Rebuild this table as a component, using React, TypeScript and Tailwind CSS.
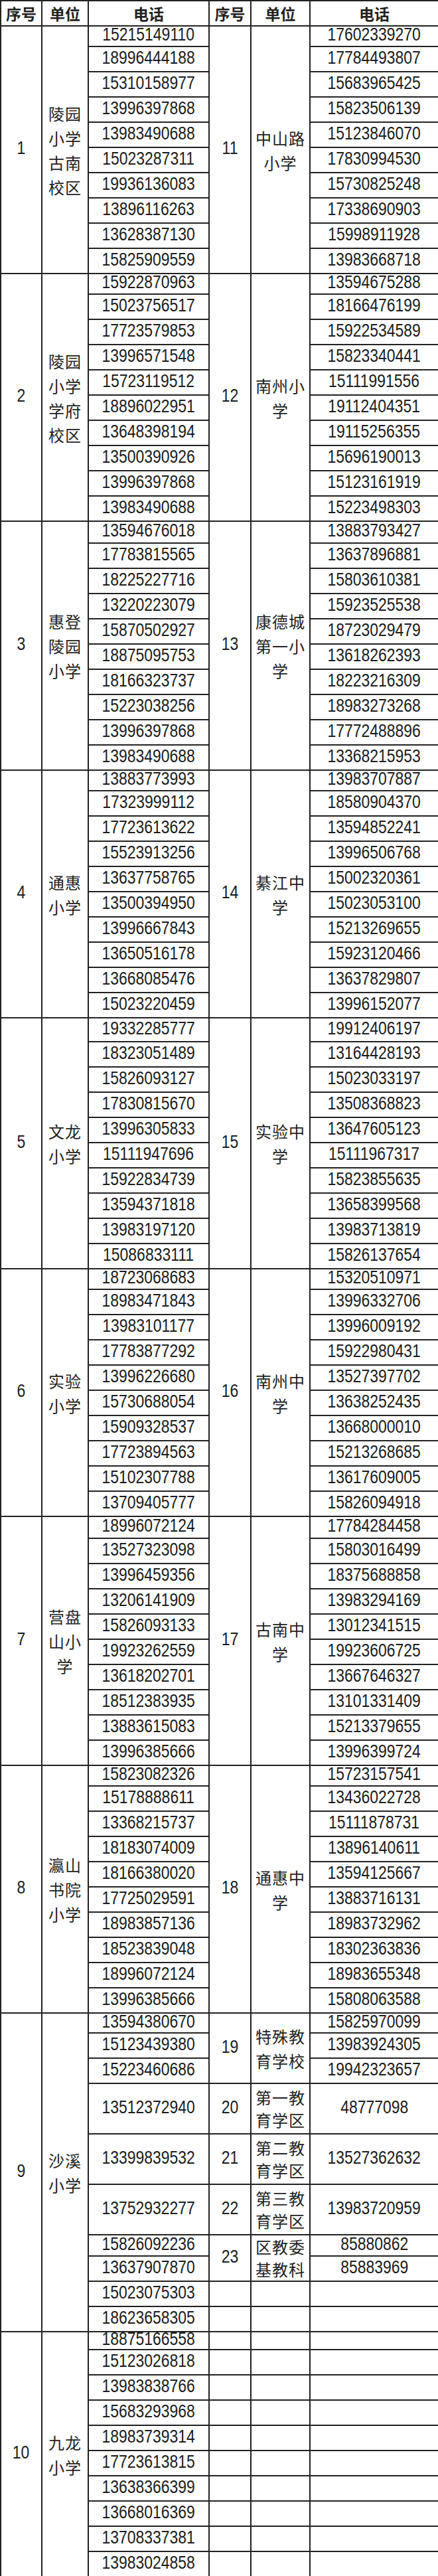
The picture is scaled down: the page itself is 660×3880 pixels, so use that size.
import React from "react";

type Section = {
  no: string;
  name: string;
  first: string;
  phones: string[];
  rno: string;
  rname: string;
  rphones: string[];
};

const SECTIONS: Section[] = [
  {
    no: "1",
    name: "陵园小学古南校区",
    first: "h-[31px]",
    phones: ["15215149110", "18996444188", "15310158977", "13996397868", "13983490688", "15023287311", "19936136083", "13896116263", "13628387130", "15825909559"],
    rno: "11",
    rname: "中山路小学",
    rphones: ["17602339270", "17784493807", "15683965425", "15823506139", "15123846070", "17830994530", "15730825248", "17338690903", "15998911928", "13983668718"],
  },
  {
    no: "2",
    name: "陵园小学学府校区",
    first: "h-[31px]",
    phones: ["15922870963", "15023756517", "17723579853", "13996571548", "15723119512", "18896022951", "13648398194", "13500390926", "13996397868", "13983490688"],
    rno: "12",
    rname: "南州小学",
    rphones: ["13594675288", "18166476199", "15922534589", "15823340441", "15111991556", "19112404351", "19115256355", "15696190013", "15123161919", "15223498303"],
  },
  {
    no: "3",
    name: "惠登陵园小学",
    first: "h-[33px]",
    phones: ["13594676018", "17783815565", "18225227716", "13220223079", "15870502927", "18875095753", "18166323737", "15223038256", "13996397868", "13983490688"],
    rno: "13",
    rname: "康德城第一小学",
    rphones: ["13883793427", "13637896881", "15803610381", "15923525538", "18723029479", "13618262393", "18223216309", "18983273268", "17772488896", "13368215953"],
  },
  {
    no: "4",
    name: "通惠小学",
    first: "h-[31px]",
    phones: ["13883773993", "17323999112", "17723613622", "15523913256", "13637758765", "13500394950", "13996667843", "13650516178", "13668085476", "15023220459"],
    rno: "14",
    rname: "綦江中学",
    rphones: ["13983707887", "18580904370", "13594852241", "13996506768", "15002320361", "15023053100", "15213269655", "15923120466", "13637829807", "13996152077"],
  },
  {
    no: "5",
    name: "文龙小学",
    first: "h-[36px]",
    phones: ["19332285777", "18323051489", "15826093127", "17830815670", "13996305833", "15111947696", "15922834739", "13594371818", "13983197120", "15086833111"],
    rno: "15",
    rname: "实验中学",
    rphones: ["19912406197", "13164428193", "15023033197", "13508368823", "13647605123", "15111967317", "15823855635", "13658399568", "13983713819", "15826137654"],
  },
  {
    no: "6",
    name: "实验小学",
    first: "h-[31px]",
    phones: ["18723068683", "18983471843", "13983101177", "17783877292", "13996226680", "15730688054", "15909328537", "17723894563", "15102307788", "13709405777"],
    rno: "16",
    rname: "南州中学",
    rphones: ["15320510971", "13996332706", "13996009192", "15922980431", "13527397702", "13638252435", "13668000010", "15213268685", "13617609005", "15826094918"],
  },
  {
    no: "7",
    name: "营盘山小学",
    first: "h-[33px]",
    phones: ["18996072124", "13527323098", "13996459356", "13206141909", "15826093133", "19923262559", "13618202701", "18512383935", "13883615083", "13996385666"],
    rno: "17",
    rname: "古南中学",
    rphones: ["17784284458", "15803016499", "18375688858", "13983294169", "13012341515", "19923606725", "13667646327", "13101331409", "15213379655", "13996399724"],
  },
  {
    no: "8",
    name: "瀛山书院小学",
    first: "h-[31px]",
    phones: ["15823082326", "15178888611", "13368215737", "18183074009", "18166380020", "17725029591", "18983857136", "18523839048", "18996072124", "13996385666"],
    rno: "18",
    rname: "通惠中学",
    rphones: ["15723157541", "13436022728", "15111878731", "13896140611", "13594125667", "13883716131", "18983732962", "18302363836", "18983655348", "15808063588"],
  },
];

const SHAXI = ["13594380670", "15123439380", "15223460686", "13512372940", "13399839532", "13752932277", "15826092236", "13637907870", "15023075303", "18623658305"];
const SHAXI_H = ["h-[30px]", "h-[38px]", "h-[38px]", "h-[76px]", "h-[76px]", "h-[76px]", "h-[32px]", "h-[38px]", "h-[38px]", "h-[38px]"];

const JIULONG = ["18875166558", "15123026818", "13983838766", "15683293968", "18983739314", "17723613815", "13638366399", "13668016369", "13708337381", "13983024858"];

const cell = "border-2 border-[#222] p-0 text-center align-middle";

function Num({ v }: { v: string }) {
  return (
    <span className="inline-block scale-x-[0.82] font-['Liberation_Sans',sans-serif] text-[28px] leading-[20px] text-[#1c1c1c]">
      {v}
    </span>
  );
}

function Name({ v, tight }: { v: string; tight?: boolean }) {
  return (
    <div
      className={
        "font-['Noto_Sans_CJK_SC',sans-serif] text-[24px] tracking-[1px] text-[#222] " +
        (tight ? "leading-[34px]" : "leading-[37px]")
      }
    >
      {v}
    </div>
  );
}

function SectionRows({ s }: { s: Section }) {
  return (
    <>
      {s.phones.map((p, i) => (
        <tr key={p + i} className={i === 0 ? s.first : "h-[38px]"}>
          {i === 0 && (
            <>
              <td rowSpan={10} className={cell}>
                <Num v={s.no} />
              </td>
              <td rowSpan={10} className={cell}>
                <Name v={s.name} />
              </td>
            </>
          )}
          <td className={cell}>
            <Num v={p} />
          </td>
          {i === 0 && (
            <>
              <td rowSpan={10} className={cell}>
                <Num v={s.rno} />
              </td>
              <td rowSpan={10} className={cell}>
                <Name v={s.rname} />
              </td>
            </>
          )}
          <td className={cell}>
            <Num v={s.rphones[i]} />
          </td>
        </tr>
      ))}
    </>
  );
}

export default function App() {
  return (
    <div className="w-[660px] bg-white">
      <table className="w-[660px] table-fixed border-collapse">
        <colgroup>
          <col className="w-[62px]" />
          <col className="w-[70px]" />
          <col className="w-[182px]" />
          <col className="w-[63px]" />
          <col className="w-[89px]" />
          <col className="w-[194px]" />
        </colgroup>
        <thead>
          <tr className="h-[38px]">
            {["序号", "单位", "电话", "序号", "单位", "电话"].map((h, i) => (
              <th
                key={i}
                className={cell + " font-['Noto_Sans_CJK_SC',sans-serif] text-[23px] font-bold leading-none text-[#222]"}
              >
                {h}
              </th>
            ))}
          </tr>
        </thead>
        <tbody>
          {SECTIONS.map((s) => (
            <SectionRows key={s.no} s={s} />
          ))}

          {/* 沙溪小学 with the odd right-hand blocks */}
          {SHAXI.map((p, i) => (
            <tr key={"sx" + i} className={SHAXI_H[i]}>
              {i === 0 && (
                <>
                  <td rowSpan={10} className={cell}>
                    <Num v="9" />
                  </td>
                  <td rowSpan={10} className={cell}>
                    <Name v="沙溪小学" />
                  </td>
                </>
              )}
              <td className={cell}>
                <Num v={p} />
              </td>
              {i === 0 && (
                <>
                  <td rowSpan={3} className={cell}>
                    <Num v="19" />
                  </td>
                  <td rowSpan={3} className={cell}>
                    <Name v="特殊教育学校" />
                  </td>
                </>
              )}
              {i === 0 && <td className={cell}><Num v="15825970099" /></td>}
              {i === 1 && <td className={cell}><Num v="13983924305" /></td>}
              {i === 2 && <td className={cell}><Num v="19942323657" /></td>}
              {i === 3 && (
                <>
                  <td className={cell}><Num v="20" /></td>
                  <td className={cell}><Name v="第一教育学区" tight /></td>
                  <td className={cell}><Num v="48777098" /></td>
                </>
              )}
              {i === 4 && (
                <>
                  <td className={cell}><Num v="21" /></td>
                  <td className={cell}><Name v="第二教育学区" tight /></td>
                  <td className={cell}><Num v="13527362632" /></td>
                </>
              )}
              {i === 5 && (
                <>
                  <td className={cell}><Num v="22" /></td>
                  <td className={cell}><Name v="第三教育学区" tight /></td>
                  <td className={cell}><Num v="13983720959" /></td>
                </>
              )}
              {i === 6 && (
                <>
                  <td rowSpan={2} className={cell}><Num v="23" /></td>
                  <td rowSpan={2} className={cell}><Name v="区教委基教科" tight /></td>
                  <td className={cell}><Num v="85880862" /></td>
                </>
              )}
              {i === 7 && <td className={cell}><Num v="85883969" /></td>}
              {i >= 8 && (
                <>
                  <td className={cell} />
                  <td className={cell} />
                  <td className={cell} />
                </>
              )}
            </tr>
          ))}

          {JIULONG.map((p, i) => (
            <tr key={"jl" + i} className={i === 0 ? "h-[24px]" : "h-[38px]"}>
              {i === 0 && (
                <>
                  <td rowSpan={10} className={cell}>
                    <Num v="10" />
                  </td>
                  <td rowSpan={10} className={cell}>
                    <Name v="九龙小学" />
                  </td>
                </>
              )}
              <td className={cell}>
                <Num v={p} />
              </td>
              <td className={cell} />
              <td className={cell} />
              <td className={cell} />
            </tr>
          ))}
        </tbody>
      </table>
    </div>
  );
}
